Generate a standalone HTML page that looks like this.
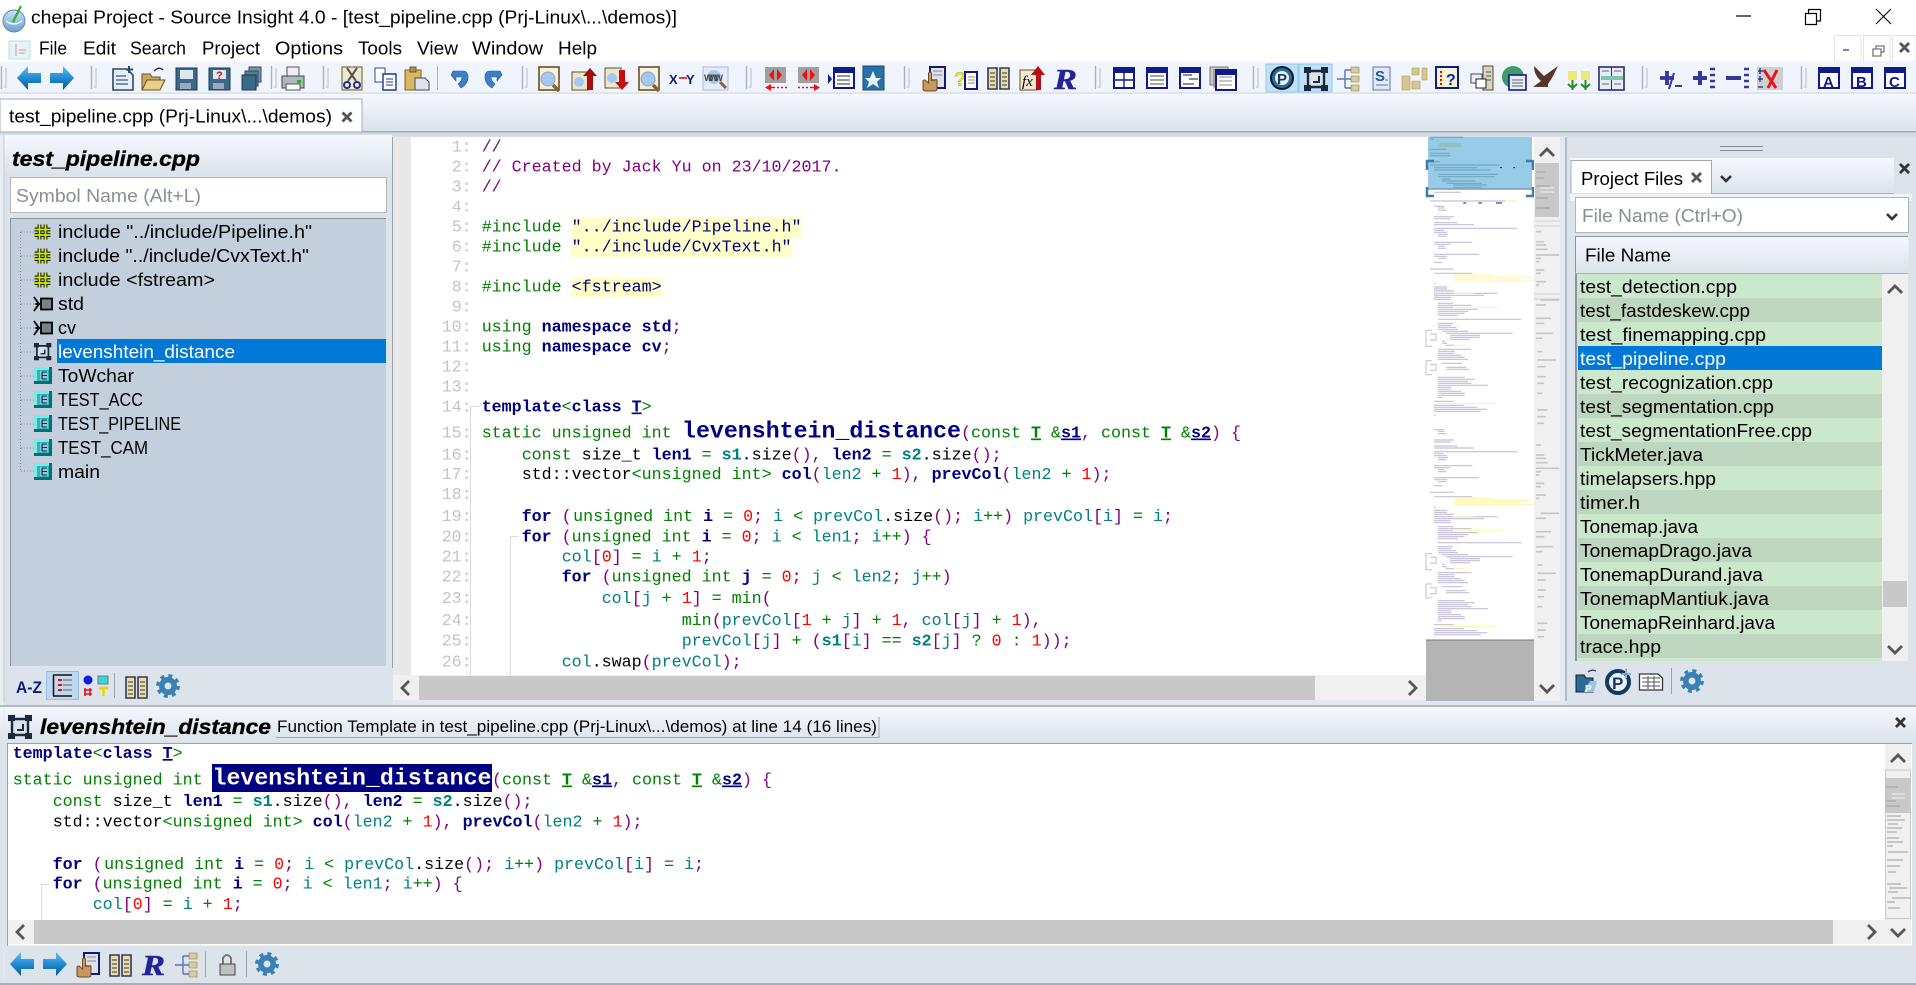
<!DOCTYPE html>
<html><head><meta charset="utf-8"><title>chepai Project - Source Insight 4.0</title>
<style>
html,body{margin:0;padding:0;background:#dce3eb;width:1916px;height:985px;overflow:hidden}
svg{display:block}
text{white-space:pre}
.s{font-family:"Liberation Sans",sans-serif;font-size:18.5px;fill:#000}
.p{font-family:"Liberation Sans",sans-serif;font-size:18.5px;fill:#8a8f94}
.b{font-family:"Liberation Sans",sans-serif;font-size:21px;font-weight:bold;font-style:italic;fill:#000;stroke:#000;stroke-width:.35px}
.m{font-family:"Liberation Mono",monospace;font-size:16.67px;fill:#000}
.n{font-family:"Liberation Mono",monospace;font-size:16.67px;fill:#c4c4c4}
.c{fill:#800080}.g{fill:#008000}.v{fill:#000080;font-weight:bold}.w{fill:#000080}
.t{fill:#008080}.tb{fill:#008080;font-weight:bold}.r{fill:#ff0000}.k{fill:#000}
.gb{fill:#008000;font-weight:bold}.u{text-decoration:underline}
</style></head><body>
<svg width="1916" height="985" viewBox="0 0 1916 985" xmlns="http://www.w3.org/2000/svg">
<defs>
<linearGradient id="hd" x1="0" y1="0" x2="0" y2="1"><stop offset="0" stop-color="#f5f8fe"/><stop offset="1" stop-color="#dce3eb"/></linearGradient>
<linearGradient id="ar" x1="0" y1="0" x2="0" y2="1"><stop offset="0" stop-color="#63bdf0"/><stop offset=".55" stop-color="#1c86cf"/><stop offset="1" stop-color="#0b5796"/></linearGradient>
<linearGradient id="sp" x1="0" y1="0" x2="0" y2="1"><stop offset="0" stop-color="#cfe2f4"/><stop offset="1" stop-color="#6a9fd0"/></linearGradient>
<clipPath id="mmc"><rect x="0" y="0" width="342" height="1525"/></clipPath>
<g id="al"><path d="M0 12 11 0V7H24V17H11V24Z" fill="url(#ar)"/></g>
<g id="ar2"><path d="M24 12 13 0V7H0V17H13V24Z" fill="url(#ar)"/></g>
<g id="gear"><circle cx="12" cy="12" r="10.3" fill="none" stroke="#3a80b5" stroke-width="3.2" stroke-dasharray="4 4.09"/><circle cx="12" cy="12" r="6.2" fill="none" stroke="#3a80b5" stroke-width="5.5"/></g>
<g id="book"><path d="M1 2H10V23H1ZM13 2H22V23H13Z" fill="#e6dcae" stroke="#333a55" stroke-width="1.6"/><path d="M3 7H8M3 11H8M3 15H8M3 19H8M15 7H20M15 11H20M15 15H20M15 19H20" stroke="#777050" stroke-width="1.6"/></g>
<g id="hand"><rect x="8" y="0" width="15" height="21" fill="#dfe0ea" stroke="#101a78" stroke-width="2"/><path d="M11 4H20M11 8H20" stroke="#888"/><path d="M1 14V22Q1 24 4 24H13Q15 24 15 21V13Q13 12 12 14V13Q10 12 9.5 14V6Q8 4 6.5 6V16L3 13Q1 13 1 14Z" fill="#c9985f" stroke="#6a4a24"/></g>
<g id="tree"><path d="M0 12H8M8 3V21M8 3H14M8 12H14M8 21H14" stroke="#5a74b8" stroke-width="1.4" fill="none"/><path d="M14 0H22V6H14ZM14 9H22V15H14ZM14 18H22V24H14Z" fill="#d9cc98" stroke="#8a7c50" stroke-width=".6"/></g>
<g id="frame"><path d="M4 4H20V20H4Z" fill="#d9e2ec" stroke="#1a2a3a" stroke-width="2.4"/><path d="M0 0H7V6H0ZM17 0H24V6H17ZM0 18H7V24H0ZM17 18H24V24H17Z" fill="#1a2a3a"/><path d="M9 15H15V9" stroke="#1a2a3a" stroke-width="2" fill="none"/></g>
<g id="win"><rect x="1" y="1" width="20" height="20" fill="#fff" stroke="#101a88" stroke-width="2"/><rect x="1" y="1" width="20" height="5" fill="#101a88"/></g>
<g id="hash"><path d="M0 5H16M0 10.500H16M5 0V15M11 0V15" stroke="#0a0a0a" stroke-width="3.800"/><path d="M0 5H16M0 10.500H16M5 0V15M11 0V15" stroke="#cdf000" stroke-width="1.800"/></g>
<g id="ns"><path d="M0 2 5 9 0 16" fill="none" stroke="#000" stroke-width="1.8"/><path d="M1 9H7" stroke="#000" stroke-width="1.6"/><rect x="7" y="3.5" width="11" height="11" fill="#7a8088" stroke="#000" stroke-width="1.8"/></g>
<g id="fn"><rect x="0" y="0" width="18" height="17" fill="#2ab8ba"/><path d="M0 0H18V3H3V17H0Z" fill="#7fe8e8"/><path d="M0 14H18V17H0ZM15 0H18V17H15Z" fill="#0c6a70"/><rect x="6" y="4" width="8" height="9" fill="#8ccbcb"/><path d="M8 5H13M8 8.500H13M8 12H13M8 5V12" stroke="#125" stroke-width="1.100" fill="none"/></g>
<g id="x"><path d="M1 1 10 10M10 1 1 10" stroke="#555" stroke-width="2.800"/></g>
<g id="xd"><path d="M1 1 10 10M10 1 1 10" stroke="#333" stroke-width="2.800"/></g>
<g id="cu"><path d="M0 8 7 1 14 8" fill="none" stroke="#555" stroke-width="2.800"/></g>
<g id="cd"><path d="M0 1 7 8 14 1" fill="none" stroke="#555" stroke-width="2.800"/></g>
<g id="cl"><path d="M8 0 1 7 8 14" fill="none" stroke="#555" stroke-width="2.800"/></g>
<g id="cr"><path d="M1 0 8 7 1 14" fill="none" stroke="#555" stroke-width="2.800"/></g>
<g id="sp1"><path d="M1.500 4V27" stroke="#a8b0ba" stroke-width="1.400"/><path d="M6 6V25H4" stroke="#b8bec6" fill="none"/></g>
<g id="mg"><circle cx="8" cy="10" r="7" fill="#a6c8ee" stroke="#88a8c8"/><path d="M13 16 19 22" stroke="#8a6030" stroke-width="3.500"/></g>
<g id="mmg" stroke-width="3.400" fill="none" stroke="#c4bfd8">
<path d="M42 229h30M54 234h20M54 241h25M42 260h60M42 266h50M42 278h70M42 284h120M42 295h250M42 301h30M42 307h40M54 313h30M54 319h25M42 337h115M42 343h50M54 349h20M54 355h25M42 373h135M42 379h40M54 385h25M42 397h25M30 417h70M42 430h115M42 461h5M42 471h40M42 477h40M42 483h60M42 490h190M42 496h150M42 502h50M42 508h50M54 520h45M54 526h100M54 532h45M54 538h120M54 544h90M54 550h80M54 556h60M54 568h250M54 580h45M54 586h40M54 592h55M54 598h60M66 604h80M78 610h200M90 616h90M90 622h90M90 628h60M66 634h10M66 640h15M78 646h25M54 658h100M54 664h50M54 670h50M54 676h70M54 682h80M54 688h90M66 700h60M78 712h60M78 718h70M54 742h80M54 748h110M54 754h90M54 760h100M54 766h150M54 772h40M54 778h40M54 784h70M54 790h80M54 796h80M54 802h12M42 814h60M42 826h90M42 832h130M42 838h160M42 844h140M42 856h5"/>
<path stroke="#fbf4ae" stroke-width="3" d="M102 435h120M102 441h235M102 447h200M102 453h240M100 490h60M100 532h140M100 646h35M60 820h170"/>
<path stroke="#c8c8c8" d="M18 601h18M18 601v48h18M30 612h18v18h-18M18 692h18M18 692v42h18M30 703h18v18h-18"/>
</g>
<g id="trk" stroke="#c6c6c6" stroke-width="5" fill="none"><path d="M408 305h15M408 335h25M408 345h30M408 358h35M408 375h70M408 385h15M408 395h10M408 420h25M408 430h15M408 455h30M408 465h10M422 510h55M408 525h30M408 565h45M408 580h25M408 610h50M408 625h20M412 665h15M412 690h55M412 710h25M412 740h25M412 760h20M412 790h15M412 840h30M412 860h25M412 880h20"/></g>
</defs>

<rect width="1916" height="985" fill="#dce3eb"/>
<!-- title bar -->
<rect width="1916" height="62" fill="#fff"/>
<circle cx="14" cy="21" r="11" fill="url(#sp)" stroke="#5a8ab8"/>
<path d="M6 21Q14 27 22 21" stroke="#fff" stroke-width="1.200" fill="none"/>
<path d="M13 22 21 6" stroke="#2cb030" stroke-width="2.200"/>
<text class="s" x="31" y="23.500" textLength="646" lengthAdjust="spacingAndGlyphs">chepai Project - Source Insight 4.0 - [test_pipeline.cpp (Prj-Linux\...\demos)]</text>
<path d="M1736 16H1751" stroke="#000" stroke-width="1.200"/>
<path d="M1805.500 13.500H1816.500V24.500H1805.500ZM1808.500 13V9.500H1820.500V21H1817" fill="none" stroke="#000" stroke-width="1.200"/>
<path d="M1876 9 1891 24M1891 9 1876 24" stroke="#000" stroke-width="1.100"/>
<path d="M1834.500 35.500H1861V62H1834.500ZM1863.500 35.500H1890V62H1863.500ZM1892.500 35.500H1916V62H1892.500Z" fill="#fff" stroke="#e4e4e4"/>
<path d="M1843 50H1849" stroke="#888" stroke-width="2"/>
<path d="M1873 49H1881V56H1873ZM1876 49V46H1884V52H1881" fill="none" stroke="#777" stroke-width="1.300"/>
<use href="#x" x="1899" y="42"/>
<!-- menu -->
<rect x="9" y="41" width="21" height="18" fill="#e4f3f8" stroke="#b8e0e8"/>
<path d="M16 44V56M19 50H26M19 53H25" stroke="#e59090"/>
<text class="s" x="39" y="54.500" textLength="28" lengthAdjust="spacingAndGlyphs">File</text>
<text class="s" x="83" y="54.500" textLength="33" lengthAdjust="spacingAndGlyphs">Edit</text>
<text class="s" x="130" y="54.500" textLength="56" lengthAdjust="spacingAndGlyphs">Search</text>
<text class="s" x="202" y="54.500" textLength="58" lengthAdjust="spacingAndGlyphs">Project</text>
<text class="s" x="275" y="54.500" textLength="68" lengthAdjust="spacingAndGlyphs">Options</text>
<text class="s" x="358" y="54.500" textLength="44" lengthAdjust="spacingAndGlyphs">Tools</text>
<text class="s" x="417" y="54.500" textLength="41" lengthAdjust="spacingAndGlyphs">View</text>
<text class="s" x="472" y="54.500" textLength="71" lengthAdjust="spacingAndGlyphs">Window</text>
<text class="s" x="558" y="54.500" textLength="39" lengthAdjust="spacingAndGlyphs">Help</text>
<!-- toolbar -->
<rect y="62" width="1916" height="32" fill="#f0f4fc"/>
<rect y="92" width="1916" height="2" fill="#dfe4ee"/>
<rect x="1266" y="64" width="32" height="28" fill="#c0e0f8" stroke="#90c8f0"/>
<rect x="1299" y="64" width="33" height="28" fill="#c0e0f8" stroke="#90c8f0"/>
<g>
<use href="#sp1" x="0" y="62"/><use href="#sp1" x="90" y="62"/><use href="#sp1" x="270" y="62" /><use href="#sp1" x="322" y="62"/><use href="#sp1" x="521" y="62"/><use href="#sp1" x="745" y="62"/><use href="#sp1" x="903" y="62"/><use href="#sp1" x="1094" y="62"/><use href="#sp1" x="1252" y="62"/><use href="#sp1" x="1641" y="62"/><use href="#sp1" x="1800" y="62"/>
<path d="M437.500 66V90" stroke="#a8b0ba"/>
<use href="#al" x="17" y="66"/><use href="#ar2" x="50" y="66"/>
<path d="M113 69H127L133 75V90H113Z" fill="#e8eef6" stroke="#2a4a6a" stroke-width="1.600"/><path d="M116 76H126M116 80H128M116 84H128" stroke="#3a5a8a" stroke-width="1.200"/><path d="M129 66V73M126 69.500H133" stroke="#2a4a6a" stroke-width="2"/>
<path d="M142 90V74H150L152 77H160V90Z" fill="#c9a860" stroke="#6a5020"/><path d="M142 90 147 80H165L160 90Z" fill="#e8cf8c" stroke="#6a5020"/><path d="M154 71Q159 66 163 70" stroke="#334" stroke-width="1.400" fill="none"/>
<rect x="176" y="68" width="21" height="22" fill="#3a6a88" stroke="#1a3a50"/><rect x="180" y="70" width="13" height="9" fill="#dfe8ee"/><rect x="180" y="83" width="11" height="6" fill="#9ab"/>
<rect x="209" y="68" width="21" height="22" fill="#3a6a88" stroke="#1a3a50"/><rect x="213" y="70" width="13" height="9" fill="#dfe8ee"/><rect x="213" y="83" width="11" height="6" fill="#9ab"/><text x="216" y="79" font-family="Liberation Sans" font-weight="bold" font-size="11" fill="#d01010">?</text>
<rect x="249" y="67" width="12" height="15" fill="#7a94a8" stroke="#2a4a60"/><rect x="245" y="71" width="13" height="15" fill="#5a7a90" stroke="#2a4a60"/><rect x="242" y="75" width="14" height="15" fill="#3a6a88" stroke="#1a3a50"/>
<path d="M287 67H299V76H287Z" fill="#eee" stroke="#555"/><path d="M282 76H304V88H282Z" fill="#b0b8c0" stroke="#445"/><rect x="286" y="84" width="14" height="6" fill="#fff" stroke="#555"/><rect x="297" y="80" width="4" height="3" fill="#28b028"/>
<rect x="342" y="67" width="20" height="23" fill="#efe8cc" stroke="#6a5a20"/><path d="M347 68 356 81M357 68 348 81" stroke="#555" stroke-width="2"/><circle cx="347" cy="85" r="3" fill="none" stroke="#20309a" stroke-width="2"/><circle cx="357" cy="85" r="3" fill="none" stroke="#20309a" stroke-width="2"/>
<path d="M375 68H385V82H375Z" fill="#fff" stroke="#2a4a9a"/><path d="M383 74H396V90H383Z" fill="#fff" stroke="#1a3a8a" stroke-width="1.400"/><path d="M386 79H393M386 82H393M386 85H393" stroke="#1a3a8a"/>
<rect x="405" y="70" width="16" height="20" fill="#d8b860" stroke="#7a6020"/><rect x="410" y="67" width="6" height="5" fill="#b09040" stroke="#654"/><path d="M415 78H425L429 82V90H415Z" fill="#dfe4ec" stroke="#445"/>
<path d="M453 71H463Q468 71 468 77Q468 84 461 88L458 84Q462 81 462 77H456V81L451 75Z" fill="#3f7fc8" stroke="#2a5a9a" stroke-width=".6"/><path d="M500 71H490Q485 71 485 77Q485 84 492 88L495 84Q491 81 491 77H497V81L502 75Z" fill="#3f7fc8" stroke="#2a5a9a" stroke-width=".6"/>
<rect x="539" y="67" width="20" height="23" fill="#f4f0dc" stroke="#6a5020" stroke-width="1.600"/><use href="#mg" x="540" y="69"/>
<rect x="572" y="72" width="17" height="18" fill="#ece6cc" stroke="#6a5020"/><circle cx="579" cy="82" r="5" fill="#a6c8ee"/><path d="M590 68 597 76H593V90H587V76H583Z" fill="#a80d12"/>
<rect x="605" y="68" width="16" height="20" fill="#ece6cc" stroke="#6a5020"/><circle cx="612" cy="78" r="5" fill="#a6c8ee"/><path d="M622 90 629 82H625V70H619V82H615Z" fill="#c80d12"/>
<rect x="639" y="67" width="20" height="23" fill="#f4f0dc" stroke="#6a5020" stroke-width="1.600"/><use href="#mg" x="640" y="69"/>
<text x="669" y="84" font-family="Liberation Sans" font-weight="bold" font-size="13" fill="#101a78" textLength="10">X</text><path d="M679 78H687" stroke="#e01010" stroke-width="1.600"/><text x="686" y="84" font-family="Liberation Sans" font-weight="bold" font-size="13" fill="#101a78" textLength="9">Y</text>
<rect x="703" y="67" width="25" height="23" fill="#e8ecf8" stroke="#a8b8e0"/><circle cx="714" cy="77" r="7" fill="#a6c8ee"/><text x="704" y="81" font-family="Liberation Sans" font-weight="bold" font-size="9" fill="#444" textLength="19">WWW</text><path d="M720 82 726 88" stroke="#8a6030" stroke-width="3"/>
<rect x="765" y="67" width="21" height="16" fill="#a0a0a0"/><path d="M774 69V81L769 75ZM777 69V81L782 75Z" fill="#f01010"/><path d="M765 87.500 771 84V91Z" fill="#f01010"/><path d="M771 87.500H775M777 87.500H779M781 87.500H783M785 87.500H787" stroke="#f01010" stroke-width="1.500"/>
<rect x="798" y="67" width="21" height="16" fill="#a0a0a0"/><path d="M807 69V81L802 75ZM810 69V81L815 75Z" fill="#f01010"/><path d="M820 87.500 814 84V91Z" fill="#f01010"/><path d="M798 87.500H800M802 87.500H804M806 87.500H808M810 87.500H814" stroke="#f01010" stroke-width="1.500"/>
<use href="#win" x="833" y="67"/><path d="M837 76H850M837 80H850M837 84H850" stroke="#777" stroke-width="1.600"/><path d="M828 74V84L832 79Z" fill="#101a88"/>
<rect x="863" y="66" width="21" height="24" fill="#2a6fa8" stroke="#1a4a70"/><path d="M873 71 876 78H881L877 82 879 88 873 84 867 88 869 82 865 78H870Z" fill="#eaf4fc"/>
<use href="#hand" x="922" y="67"/>
<text x="954" y="86" font-family="Liberation Sans" font-weight="bold" font-size="20" fill="#e8e800" stroke="#888" stroke-width=".3">?</text><rect x="965" y="72" width="12" height="17" fill="#fff" stroke="#101a88" stroke-width="2"/><path d="M968 77H975M968 80H975M968 83H975" stroke="#888"/>
<use href="#book" x="987" y="66"/>
<rect x="1020" y="70" width="17" height="20" fill="#f0e8d0" stroke="#6a5020"/><text x="1022" y="86" font-family="Liberation Serif" font-style="italic" font-size="15" fill="#000">fx</text><path d="M1038 66 1045 75H1041V90H1036V75H1031Z" fill="#b80d12"/>
<text x="1054" y="89" font-family="Liberation Serif" font-weight="bold" font-style="italic" font-size="29" fill="#24249a" stroke="#24249a" stroke-width=".5" textLength="23" lengthAdjust="spacingAndGlyphs">R</text>
<use href="#win" x="1113" y="67"/><path d="M1124 72V88M1114 80H1134" stroke="#101a88" stroke-width="1.400"/>
<use href="#win" x="1146" y="67"/><path d="M1150 76H1164M1150 80H1164M1150 84H1164" stroke="#888" stroke-width="1.600"/>
<use href="#win" x="1179" y="67"/><path d="M1183 75H1192M1189 79H1198M1183 84H1194" stroke="#666" stroke-width="1.400"/>
<rect x="1210" y="67" width="18" height="18" fill="#c8c8c8" stroke="#777"/><rect x="1214" y="70" width="18" height="17" fill="#d8d8d8" stroke="#777"/><use href="#win" x="1215" y="69"/><path d="M1219 77H1232M1219 81H1232M1219 85H1232" stroke="#888"/>
<circle cx="1282" cy="78" r="11" fill="#2a6a98" stroke="#0a1a2a" stroke-width="2"/><circle cx="1282" cy="78" r="7" fill="#e8f0f8"/><text x="1277" y="84" font-family="Liberation Sans" font-weight="bold" font-size="15" fill="#1a3a5a">P</text>
<use href="#frame" x="1304" y="67"/>
<use href="#tree" x="1337" y="67"/>
<rect x="1373" y="67" width="17" height="23" fill="#e4e8f2" stroke="#5a74b8"/><text x="1375" y="81" font-family="Liberation Sans" font-weight="bold" font-size="15" fill="#1a5aa8">S</text><path d="M1376 85H1388M1385 80H1388" stroke="#5a74b8"/>
<path d="M1412 68H1419V75H1412ZM1422 68H1427V80H1422ZM1402 76H1410V90H1402ZM1412 81H1420V89H1412Z" fill="#d6c88c" stroke="#a8985c" stroke-width=".6"/>
<rect x="1436" y="67" width="22" height="21" fill="#f4f4d0" stroke="#101a88" stroke-width="2"/><text x="1446" y="85" font-family="Liberation Sans" font-weight="bold" font-size="16" fill="#0820c8">?</text><path d="M1441 71V86" stroke="#e01010" stroke-dasharray="2 2" stroke-width="2"/>
<rect x="1483" y="66" width="10" height="24" fill="#d8d4c0" stroke="#5a4a30"/><path d="M1486 72H1491M1486 76H1491M1486 80H1491" stroke="#555"/><rect x="1471" y="74" width="11" height="9" fill="#eef" stroke="#334a88"/><rect x="1476" y="79" width="10" height="9" fill="#fff" stroke="#222"/>
<circle cx="1513" cy="77" r="11" fill="#3e9a68"/><rect x="1509" y="75" width="17" height="15" fill="#e8ecf8" stroke="#101a88" stroke-width="1.600"/><path d="M1512 80H1523M1512 83H1523M1512 86H1523" stroke="#666"/>
<path d="M1534 66 1544 76 1558 66 1552 78 1548 84 1548 87H1533L1541 81Q1534 75 1534 66Z" fill="#5a3428"/>
<rect x="1568" y="71" width="9" height="9" fill="#ece87a"/><rect x="1581" y="71" width="9" height="9" fill="#ece87a"/><path d="M1572.500 80V90M1585.500 80V90M1568 84 1572.500 88 1577 84M1581 84 1585.500 88 1590 84" stroke="#2a8a2a" stroke-width="2" fill="none"/>
<rect x="1599" y="67" width="25" height="23" fill="#e8ecf8" stroke="#2a2a78" stroke-width="1.600"/><path d="M1611.500 67V90" stroke="#2a2a78"/><path d="M1601 76H1623V80H1601Z" fill="#7ac8a8"/><path d="M1602 71H1609M1614 71H1621M1602 84H1609M1614 84H1621" stroke="#667"/>
<path d="M1660 78H1674M1667 71V85" stroke="#34389a" stroke-width="3.800"/><path d="M1674 73 1669 89M1675 86H1682" stroke="#34389a" stroke-width="2"/>
<path d="M1693 78H1707M1700 71V85" stroke="#34389a" stroke-width="4"/><path d="M1710 69H1715M1710 75H1715M1710 81H1715M1710 87H1715" stroke="#34389a" stroke-width="2.600"/>
<path d="M1726 78H1741" stroke="#34389a" stroke-width="4"/><path d="M1744 69H1749M1744 75H1749M1744 81H1749M1744 87H1749" stroke="#34389a" stroke-width="2.600"/>
<rect x="1757" y="67" width="26" height="23" fill="#cfcfcf"/><path d="M1764 70 1776 88M1777 70 1768 88" stroke="#e01818" stroke-width="3"/><path d="M1758 71H1763M1760 68V74M1758 79H1763M1760 76V82M1758 87H1763" stroke="#20288a" stroke-width="1.200"/>
<g font-family="Liberation Sans" font-weight="bold" font-size="15" fill="#101a88"><use href="#win" x="1818" y="67"/><text x="1823" y="87">A</text><use href="#win" x="1851" y="67"/><text x="1856" y="87">B</text><use href="#win" x="1884" y="67"/><text x="1889" y="87">C</text></g>
</g>
<!-- tab row -->
<rect y="94" width="1916" height="37" fill="url(#hd)"/>
<rect y="131" width="1916" height="1.500" fill="#a6abb5"/>
<rect y="132.500" width="1916" height="4" fill="#d4dbe4"/>
<path d="M0 99H362V132H0Z" fill="#fff" stroke="#a6abb5"/>
<text class="s" x="9" y="122.500" textLength="323" lengthAdjust="spacingAndGlyphs">test_pipeline.cpp (Prj-Linux\...\demos)</text>
<use href="#x" x="341.500" y="111.500"/>

<!-- left panel -->
<rect x="0" y="135" width="393" height="570" fill="#dce3eb"/>
<rect x="4" y="135" width="388" height="40" fill="url(#hd)"/>
<rect x="0" y="135" width="3.500" height="570" fill="#e9edf2"/>
<path d="M4 135V703" stroke="#c4ccd4"/>
<path d="M392.500 137V668" stroke="#9aa2aa"/>
<rect x="393" y="137" width="18" height="538" fill="#e8e8e8"/>
<text class="b" x="12" y="166" textLength="188" lengthAdjust="spacingAndGlyphs">test_pipeline.cpp</text>
<rect x="10.500" y="177.500" width="376" height="35" fill="#fff" stroke="#b0b6bd"/>
<text class="p" x="16" y="202" textLength="185" lengthAdjust="spacingAndGlyphs">Symbol Name (Alt+L)</text>
<rect x="10" y="218" width="376" height="448" fill="#c3cfdc"/>
<path d="M10.500 666V218.500H386" fill="none" stroke="#8c949c"/>
<rect x="57" y="339" width="329" height="24" fill="#0078d7"/>
<path d="M20.500 232V471M21 232H34M21 256H34M21 280H34M21 304H34M21 328H34M21 352H34M21 376H34M21 400H34M21 424H34M21 448H34M21 471H34" stroke="#8a8f96" stroke-dasharray="1 2" fill="none"/>
<use href="#hash" x="34.500" y="224.500"/><use href="#hash" x="34.500" y="248.500"/><use href="#hash" x="34.500" y="272.500"/>
<use href="#ns" x="34" y="295"/><use href="#ns" x="34" y="319"/>
<g transform="translate(34,343) scale(.72)"><use href="#frame"/></g>
<use href="#fn" x="34" y="367"/><use href="#fn" x="34" y="391"/><use href="#fn" x="34" y="415"/><use href="#fn" x="34" y="439"/><use href="#fn" x="34" y="463"/>
<text class="s" x="58" y="238" textLength="254" lengthAdjust="spacingAndGlyphs">include "../include/Pipeline.h"</text>
<text class="s" x="58" y="262" textLength="251" lengthAdjust="spacingAndGlyphs">include "../include/CvxText.h"</text>
<text class="s" x="58" y="286" textLength="157" lengthAdjust="spacingAndGlyphs">include &lt;fstream&gt;</text>
<text class="s" x="58" y="310" textLength="26" lengthAdjust="spacingAndGlyphs">std</text>
<text class="s" x="58" y="334" textLength="18" lengthAdjust="spacingAndGlyphs">cv</text>
<text class="s" x="58" y="358" textLength="177" lengthAdjust="spacingAndGlyphs" style="fill:#fff">levenshtein_distance</text>
<text class="s" x="58" y="382" textLength="76" lengthAdjust="spacingAndGlyphs">ToWchar</text>
<text class="s" x="58" y="406" textLength="85" lengthAdjust="spacingAndGlyphs">TEST_ACC</text>
<text class="s" x="58" y="430" textLength="123" lengthAdjust="spacingAndGlyphs">TEST_PIPELINE</text>
<text class="s" x="58" y="454" textLength="90" lengthAdjust="spacingAndGlyphs">TEST_CAM</text>
<text class="s" x="58" y="478" textLength="42" lengthAdjust="spacingAndGlyphs">main</text>
<!-- left bottom toolbar -->
<text x="16" y="693" font-family="Liberation Sans" font-weight="bold" font-size="17" fill="#101a78" textLength="26" lengthAdjust="spacingAndGlyphs">A-Z</text>
<rect x="46.500" y="671.500" width="32" height="28" fill="#c0d8ee" stroke="#90c0e8"/>
<path d="M53 675H72M53.500 675V696M53 696H72" stroke="#111" stroke-width="1.500" fill="none"/>
<path d="M58 680H62M58 685H62M58 690H62" stroke="#e01010" stroke-width="2"/><path d="M63 680H72M63 685H72M63 690H72" stroke="#888" stroke-width="1.500"/>
<circle cx="88" cy="680" r="4.500" fill="#0a20e0"/><rect x="98" y="676" width="10" height="8" fill="#30d8e0" stroke="#777"/>
<path d="M85 688V696M90 688V696M84 690H92M84 694H92" stroke="#e01010" stroke-width="1.500"/>
<path d="M99 688H108M103.500 688V696" stroke="#e8d800" stroke-width="2.500"/>
<path d="M114.500 673V698" stroke="#9aa2aa"/>
<use href="#book" x="125" y="675"/>
<use href="#gear" x="156" y="674"/>
<!-- editor -->
<rect x="411" y="137" width="1015" height="538" fill="#fff"/>
<path d="M479 406.500H470.500V675M518 536.500H510.500V675" fill="none" stroke="#dcdcdc"/>
<rect x="571" y="217" width="230" height="20" fill="#ffffc8"/><rect x="571" y="237" width="220" height="20" fill="#ffffc8"/><rect x="571" y="277" width="90" height="20" fill="#ffffc8"/>
<text class="n" x="451.700" y="151.500">1:</text><text class="n" x="451.700" y="171.500">2:</text><text class="n" x="451.700" y="191.500">3:</text><text class="n" x="451.700" y="211.500">4:</text><text class="n" x="451.700" y="231.500">5:</text><text class="n" x="451.700" y="251.500">6:</text><text class="n" x="451.700" y="271.500">7:</text><text class="n" x="451.700" y="291.500">8:</text><text class="n" x="451.700" y="311.500">9:</text>
<text class="n" x="441.700" y="331.500">10:</text><text class="n" x="441.700" y="351.500">11:</text><text class="n" x="441.700" y="371.500">12:</text><text class="n" x="441.700" y="391.500">13:</text><text class="n" x="441.700" y="411.500">14:</text><text class="n" x="441.700" y="437.500">15:</text><text class="n" x="441.700" y="459.500">16:</text><text class="n" x="441.700" y="479">17:</text><text class="n" x="441.700" y="499">18:</text><text class="n" x="441.700" y="521">19:</text><text class="n" x="441.700" y="541.500">20:</text><text class="n" x="441.700" y="561.500">21:</text><text class="n" x="441.700" y="581.500">22:</text><text class="n" x="441.700" y="603">23:</text><text class="n" x="441.700" y="625">24:</text><text class="n" x="441.700" y="645.500">25:</text><text class="n" x="441.700" y="666.500">26:</text>
<text class="m" x="481.700" y="151.500"><tspan class="c">//</tspan></text>
<text class="m" x="481.700" y="171.500"><tspan class="c">// Created by Jack Yu on 23/10/2017.</tspan></text>
<text class="m" x="481.700" y="191.500"><tspan class="c">//</tspan></text>
<text class="m" x="481.700" y="231.500"><tspan class="g">#include </tspan><tspan class="w">"../include/Pipeline.h"</tspan></text>
<text class="m" x="481.700" y="251.500"><tspan class="g">#include </tspan><tspan class="w">"../include/CvxText.h"</tspan></text>
<text class="m" x="481.700" y="291.500"><tspan class="g">#include </tspan><tspan class="w">&lt;fstream&gt;</tspan></text>
<text class="m" x="481.700" y="331.500"><tspan class="g">using </tspan><tspan class="v">namespace std</tspan><tspan class="c">;</tspan></text>
<text class="m" x="481.700" y="351.500"><tspan class="g">using </tspan><tspan class="v">namespace cv</tspan><tspan class="c">;</tspan></text>
<text class="m" x="481.700" y="411.500"><tspan class="v">template</tspan><tspan class="g">&lt;</tspan><tspan class="v">class </tspan><tspan class="v u">T</tspan><tspan class="g">&gt;</tspan></text>
<text class="m" x="481.700" y="437.500"><tspan class="g">static unsigned int </tspan></text>
<text class="m" x="682" y="437.500" style="font-size:23px;font-weight:bold;fill:#000080" textLength="279" lengthAdjust="spacingAndGlyphs">levenshtein_distance</text>
<text class="m" x="961" y="437.500"><tspan class="c">(</tspan><tspan class="g">const </tspan><tspan class="gb u">T</tspan><tspan class="g"> &amp;</tspan><tspan class="v u">s1</tspan><tspan class="c">,</tspan><tspan class="g"> const </tspan><tspan class="gb u">T</tspan><tspan class="g"> &amp;</tspan><tspan class="v u">s2</tspan><tspan class="c">) {</tspan></text>
<text class="m" x="521.700" y="459.500"><tspan class="g">const </tspan><tspan class="k">size_t </tspan><tspan class="v">len1</tspan><tspan class="g"> = </tspan><tspan class="tb">s1</tspan><tspan class="k">.size</tspan><tspan class="c">()</tspan><tspan class="c">, </tspan><tspan class="v">len2</tspan><tspan class="g"> = </tspan><tspan class="tb">s2</tspan><tspan class="k">.size</tspan><tspan class="c">()</tspan><tspan class="c">;</tspan></text>
<text class="m" x="521.700" y="479"><tspan class="k">std::vector</tspan><tspan class="g">&lt;unsigned int&gt; </tspan><tspan class="v">col</tspan><tspan class="c">(</tspan><tspan class="t">len2</tspan><tspan class="g"> + </tspan><tspan class="r">1</tspan><tspan class="c">), </tspan><tspan class="v">prevCol</tspan><tspan class="c">(</tspan><tspan class="t">len2</tspan><tspan class="g"> + </tspan><tspan class="r">1</tspan><tspan class="c">);</tspan></text>
<text class="m" x="521.700" y="521"><tspan class="v">for </tspan><tspan class="c">(</tspan><tspan class="g" dx="1.500">unsigned int </tspan><tspan class="v">i</tspan><tspan class="g"> = </tspan><tspan class="r">0</tspan><tspan class="c">; </tspan><tspan class="t">i</tspan><tspan class="g"> &lt; </tspan><tspan class="t">prevCol</tspan><tspan class="k">.size</tspan><tspan class="c">(); </tspan><tspan class="t">i</tspan><tspan class="g">++</tspan><tspan class="c">) </tspan><tspan class="t">prevCol</tspan><tspan class="c">[</tspan><tspan class="t">i</tspan><tspan class="c">]</tspan><tspan class="g"> = </tspan><tspan class="t">i</tspan><tspan class="c">;</tspan></text>
<text class="m" x="521.700" y="541.500"><tspan class="v">for </tspan><tspan class="c">(</tspan><tspan class="g">unsigned int </tspan><tspan class="v">i</tspan><tspan class="g"> = </tspan><tspan class="r">0</tspan><tspan class="c">; </tspan><tspan class="t">i</tspan><tspan class="g"> &lt; </tspan><tspan class="t">len1</tspan><tspan class="c">; </tspan><tspan class="t">i</tspan><tspan class="g">++</tspan><tspan class="c">) {</tspan></text>
<text class="m" x="561.700" y="561.500"><tspan class="t">col</tspan><tspan class="c">[</tspan><tspan class="r">0</tspan><tspan class="c">]</tspan><tspan class="g"> = </tspan><tspan class="t">i</tspan><tspan class="g"> + </tspan><tspan class="r">1</tspan><tspan class="c">;</tspan></text>
<text class="m" x="561.700" y="581.500"><tspan class="v">for </tspan><tspan class="c">(</tspan><tspan class="g">unsigned int </tspan><tspan class="v">j</tspan><tspan class="g"> = </tspan><tspan class="r">0</tspan><tspan class="c">; </tspan><tspan class="t">j</tspan><tspan class="g"> &lt; </tspan><tspan class="t">len2</tspan><tspan class="c">; </tspan><tspan class="t">j</tspan><tspan class="g">++</tspan><tspan class="c">)</tspan></text>
<text class="m" x="601.700" y="603"><tspan class="t">col</tspan><tspan class="c">[</tspan><tspan class="t">j</tspan><tspan class="g"> + </tspan><tspan class="r">1</tspan><tspan class="c">]</tspan><tspan class="g"> = min</tspan><tspan class="c">(</tspan></text>
<text class="m" x="681.700" y="625"><tspan class="g">min</tspan><tspan class="c">(</tspan><tspan class="t">prevCol</tspan><tspan class="c">[</tspan><tspan class="r">1</tspan><tspan class="g"> + </tspan><tspan class="t">j</tspan><tspan class="c">]</tspan><tspan class="g"> + </tspan><tspan class="r">1</tspan><tspan class="c">, </tspan><tspan class="t">col</tspan><tspan class="c">[</tspan><tspan class="t">j</tspan><tspan class="c">]</tspan><tspan class="g"> + </tspan><tspan class="r">1</tspan><tspan class="c">),</tspan></text>
<text class="m" x="681.700" y="645.500"><tspan class="t">prevCol</tspan><tspan class="c">[</tspan><tspan class="t">j</tspan><tspan class="c">]</tspan><tspan class="g"> + </tspan><tspan class="c">(</tspan><tspan class="tb">s1</tspan><tspan class="c">[</tspan><tspan class="t">i</tspan><tspan class="c">]</tspan><tspan class="g"> == </tspan><tspan class="tb">s2</tspan><tspan class="c">[</tspan><tspan class="t">j</tspan><tspan class="c">]</tspan><tspan class="g"> ? </tspan><tspan class="r">0</tspan><tspan class="g"> : </tspan><tspan class="r">1</tspan><tspan class="c">));</tspan></text>
<text class="m" x="561.700" y="666.500"><tspan class="t">col</tspan><tspan class="k">.swap</tspan><tspan class="c">(</tspan><tspan class="t">prevCol</tspan><tspan class="c">);</tspan></text>
<!-- editor h-scroll -->
<rect x="393" y="675" width="1033" height="25" fill="#f0f0f0"/>
<rect x="419" y="676" width="896" height="24" fill="#c8c8c8"/>
<use href="#cl" x="401" y="681"/><use href="#cr" x="1408" y="681"/>
<rect x="393" y="700" width="1174" height="5" fill="#e2e8f2"/>
<!-- minimap -->
<rect x="1426" y="137" width="108" height="503" fill="#fff"/>
<rect x="1426" y="640" width="108" height="61" fill="#b4b4b4"/>
<path d="M1426 640H1534" stroke="#777"/>
<rect x="1428" y="137" width="104" height="52" fill="#97cbe8"/>
<path d="M1428 189H1532" stroke="#7a9cb0" stroke-width="1.400"/>
<g transform="translate(1420,130) scale(.33333)" clip-path="url(#mmc)">
<path stroke="#6fa8c0" stroke-width="3.400" fill="none" d="M30 22h100M30 28h10M30 58h50M30 70h60M30 77h60M30 95h30M30 105h210M42 113h130M42 120h170M54 133h180M54 140h170M66 147h25M66 153h100M80 160h105M100 165h100M100 172h85"/>
<path stroke="#8dc0a0" stroke-width="3.400" fill="none" d="M58 42h65M58 48h65"/>
<path stroke="#c4bfd8" stroke-width="3.400" fill="none" d="M42 187h80M30 213h225"/>
<path stroke="#f8f09c" stroke-width="3" fill="none" d="M255 213h35"/>
<path stroke="#101a88" stroke-width="3" fill="none" d="M130 219h9M175 219h11M228 219h18M240 113h6M280 113h5"/>
<use href="#mmg"/>
<use href="#mmg" y="670"/>
</g>
<path d="M1427 170V161H1434M1533 170V161H1526M1427 187V196H1434M1533 187V196H1526" fill="none" stroke="#3b7ea6" stroke-width="2.500"/>
<!-- editor v-scroll -->
<rect x="1534" y="137" width="26" height="564" fill="#f0f0f0"/>
<use href="#cu" x="1540" y="148"/><use href="#cd" x="1540" y="684"/>
<rect x="1535" y="163" width="24" height="54" fill="#c8c8c8"/>
<path d="M1540 188H1554M1540 192H1554" stroke="#f4f4f4"/>
<g transform="translate(1400,130) scale(.33333)"><use href="#trk"/><use href="#trk" y="640"/></g>
<path d="M1536 172h10M1536 178h8M1536 186h14M1536 198h12M1536 208h14" stroke="#b4b4b4" stroke-width="2"/>
<path d="M1534 221H1560M1534 226H1560M1534 294H1560M1534 299H1560" stroke="#d0d0d0"/>
<rect x="1560" y="137" width="5" height="564" fill="#e2e8f2"/>
<rect x="1565" y="137" width="2" height="564" fill="#b3bac3"/>
<!-- right panel -->
<rect x="1567" y="137" width="349" height="564" fill="#dce3eb"/>
<path d="M1720 146.500H1763M1720 150.500H1763" stroke="#868e98"/>
<rect x="1570" y="158" width="324" height="36" fill="url(#hd)"/>
<path d="M1571 193V160.500H1711.500V193" fill="#fff" stroke="#a0a8b0"/>
<rect x="1572" y="161" width="139" height="32" fill="#fff"/>
<path d="M1711 193.500H1894" stroke="#a8b0b8"/>
<text class="s" x="1581" y="185" textLength="102" lengthAdjust="spacingAndGlyphs">Project Files</text>
<use href="#x" x="1691" y="172"/>
<path d="M1721 176 1726 181 1731 176" fill="none" stroke="#333" stroke-width="2.600"/>
<use href="#xd" x="1899" y="163"/>
<rect x="1570" y="194" width="342" height="7" fill="#f0f4fa"/>
<rect x="1575.500" y="197.500" width="333" height="35" fill="#fff" stroke="#b0b6bd"/>
<text class="p" x="1582" y="222" textLength="161" lengthAdjust="spacingAndGlyphs">File Name (Ctrl+O)</text>
<path d="M1887 214 1892 219 1897 214" fill="none" stroke="#333" stroke-width="2.600"/>
<rect x="1575.500" y="236.500" width="333" height="37" fill="url(#hd)"/>
<path d="M1575.500 273V236.500H1908" fill="none" stroke="#8c949c"/>
<path d="M1575 273.500H1908" stroke="#a8b0b8"/>
<text class="s" x="1585" y="261.500" textLength="86" lengthAdjust="spacingAndGlyphs">File Name</text>
<!-- list -->
<rect x="1575" y="274" width="2" height="387" fill="#8c949c"/>
<rect x="1577" y="274" width="305" height="387" fill="#cce8cc"/>
<path d="M1578 298H1882V322H1578ZM1578 394H1882V418H1578ZM1578 442H1882V466H1578ZM1578 490H1882V514H1578ZM1578 538H1882V562H1578ZM1578 586H1882V610H1578ZM1578 634H1882V658H1578Z" fill="#bed6bf"/>
<rect x="1578" y="346" width="304" height="24" fill="#0078d7"/>
<rect x="1882" y="274" width="26" height="387" fill="#f0f0f0"/>
<rect x="1883" y="581" width="24" height="26" fill="#c8c8c8"/>
<use href="#cu" x="1888" y="285"/><use href="#cd" x="1888" y="645"/>
<text class="s" x="1580" y="293" textLength="157" lengthAdjust="spacingAndGlyphs">test_detection.cpp</text>
<text class="s" x="1580" y="317" textLength="170" lengthAdjust="spacingAndGlyphs">test_fastdeskew.cpp</text>
<text class="s" x="1580" y="341" textLength="186" lengthAdjust="spacingAndGlyphs">test_finemapping.cpp</text>
<text class="s" x="1580" y="365" textLength="146" lengthAdjust="spacingAndGlyphs" style="fill:#fff">test_pipeline.cpp</text>
<text class="s" x="1580" y="389" textLength="193" lengthAdjust="spacingAndGlyphs">test_recognization.cpp</text>
<text class="s" x="1580" y="413" textLength="194" lengthAdjust="spacingAndGlyphs">test_segmentation.cpp</text>
<text class="s" x="1580" y="437" textLength="232" lengthAdjust="spacingAndGlyphs">test_segmentationFree.cpp</text>
<text class="s" x="1580" y="461" textLength="123" lengthAdjust="spacingAndGlyphs">TickMeter.java</text>
<text class="s" x="1580" y="485" textLength="136" lengthAdjust="spacingAndGlyphs">timelapsers.hpp</text>
<text class="s" x="1580" y="509" textLength="60" lengthAdjust="spacingAndGlyphs">timer.h</text>
<text class="s" x="1580" y="533" textLength="118" lengthAdjust="spacingAndGlyphs">Tonemap.java</text>
<text class="s" x="1580" y="557" textLength="172" lengthAdjust="spacingAndGlyphs">TonemapDrago.java</text>
<text class="s" x="1580" y="581" textLength="183" lengthAdjust="spacingAndGlyphs">TonemapDurand.java</text>
<text class="s" x="1580" y="605" textLength="189" lengthAdjust="spacingAndGlyphs">TonemapMantiuk.java</text>
<text class="s" x="1580" y="629" textLength="195" lengthAdjust="spacingAndGlyphs">TonemapReinhard.java</text>
<text class="s" x="1580" y="653" textLength="81" lengthAdjust="spacingAndGlyphs">trace.hpp</text>
<!-- right bottom toolbar -->
<path d="M1576 692V675H1584L1586 678H1593V692Z" fill="#2c6a98" stroke="#123"/><path d="M1584 692 1590 681H1597L1594 692Z" fill="#9ac4e4"/><path d="M1588 672Q1592 669 1596 671" stroke="#345" fill="none" stroke-width="1.400"/><text x="1585" y="692" font-family="Liberation Sans" font-weight="bold" font-size="10" fill="#fff">P</text>
<circle cx="1618" cy="682" r="11" fill="#e8f0f8" stroke="#143a60" stroke-width="4"/><text x="1612" y="689" font-family="Liberation Sans" font-weight="bold" font-size="17" fill="#143a60">P</text><path d="M1626 670V678M1622 674H1630" stroke="#fff" stroke-width="2"/><path d="M1626 669V679M1621 674H1631" stroke="#2a6a98" stroke-width="1"/>
<path d="M1639.500 674H1658L1662.500 678V690H1639.500Z" fill="#fff" stroke="#333" stroke-width="1.300"/><path d="M1642 678H1660M1642 682H1660M1642 686H1660M1648 676V689M1654 676V689" stroke="#555"/>
<path d="M1671.500 668V694" stroke="#9aa2aa"/>
<use href="#gear" x="1680" y="669"/>
<!-- divider -->
<rect y="705" width="1916" height="2" fill="#b3bac3"/>
<!-- preview panel -->
<rect y="707" width="1916" height="36" fill="url(#hd)"/>
<rect x="0" y="743" width="1916" height="242" fill="#dce3eb"/>
<rect y="983" width="1916" height="2" fill="#a8aeb6"/>
<path d="M4 707V983" stroke="#e6eaf0"/>
<use href="#frame" x="8" y="715"/>
<text class="b" x="40" y="734" textLength="231" lengthAdjust="spacingAndGlyphs">levenshtein_distance</text>
<path d="M276 737.500H879M879 717V738" stroke="#9aa2aa" fill="none"/>
<text class="s" x="277" y="732" style="font-size:17px" textLength="600" lengthAdjust="spacingAndGlyphs">Function Template in test_pipeline.cpp (Prj-Linux\...\demos) at line 14 (16 lines)</text>
<use href="#xd" x="1895" y="717"/>
<rect x="8" y="743.500" width="1904" height="202" fill="#fff"/>
<path d="M7.500 946V743.500H1912" fill="none" stroke="#9aa2aa"/>
<path d="M49 884.500H41.500V920" fill="none" stroke="#dcdcdc"/>
<rect x="212" y="764" width="280" height="28" fill="#000080"/>
<text class="m" x="12.700" y="758"><tspan class="v">template</tspan><tspan class="g">&lt;</tspan><tspan class="v">class </tspan><tspan class="v u">T</tspan><tspan class="g">&gt;</tspan></text>
<text class="m" x="12.700" y="784.500"><tspan class="g">static unsigned int </tspan></text>
<text class="m" x="212.500" y="784.500" style="font-size:23px;font-weight:bold;fill:#fff" textLength="279" lengthAdjust="spacingAndGlyphs">levenshtein_distance</text>
<text class="m" x="492" y="784.500"><tspan class="c">(</tspan><tspan class="g">const </tspan><tspan class="gb u">T</tspan><tspan class="g"> &amp;</tspan><tspan class="v u">s1</tspan><tspan class="c">,</tspan><tspan class="g"> const </tspan><tspan class="gb u">T</tspan><tspan class="g"> &amp;</tspan><tspan class="v u">s2</tspan><tspan class="c">) {</tspan></text>
<text class="m" x="52.700" y="806"><tspan class="g">const </tspan><tspan class="k">size_t </tspan><tspan class="v">len1</tspan><tspan class="g"> = </tspan><tspan class="tb">s1</tspan><tspan class="k">.size</tspan><tspan class="c">(), </tspan><tspan class="v">len2</tspan><tspan class="g"> = </tspan><tspan class="tb">s2</tspan><tspan class="k">.size</tspan><tspan class="c">();</tspan></text>
<text class="m" x="52.700" y="826.500"><tspan class="k">std::vector</tspan><tspan class="g">&lt;unsigned int&gt; </tspan><tspan class="v">col</tspan><tspan class="c">(</tspan><tspan class="t">len2</tspan><tspan class="g"> + </tspan><tspan class="r">1</tspan><tspan class="c">), </tspan><tspan class="v">prevCol</tspan><tspan class="c">(</tspan><tspan class="t">len2</tspan><tspan class="g"> + </tspan><tspan class="r">1</tspan><tspan class="c">);</tspan></text>
<text class="m" x="52.700" y="869"><tspan class="v">for </tspan><tspan class="c">(</tspan><tspan class="g" dx="1.500">unsigned int </tspan><tspan class="v">i</tspan><tspan class="g"> = </tspan><tspan class="r">0</tspan><tspan class="c">; </tspan><tspan class="t">i</tspan><tspan class="g"> &lt; </tspan><tspan class="t">prevCol</tspan><tspan class="k">.size</tspan><tspan class="c">(); </tspan><tspan class="t">i</tspan><tspan class="g">++</tspan><tspan class="c">) </tspan><tspan class="t">prevCol</tspan><tspan class="c">[</tspan><tspan class="t">i</tspan><tspan class="c">]</tspan><tspan class="g"> = </tspan><tspan class="t">i</tspan><tspan class="c">;</tspan></text>
<text class="m" x="52.700" y="888.500"><tspan class="v">for </tspan><tspan class="c">(</tspan><tspan class="g">unsigned int </tspan><tspan class="v">i</tspan><tspan class="g"> = </tspan><tspan class="r">0</tspan><tspan class="c">; </tspan><tspan class="t">i</tspan><tspan class="g"> &lt; </tspan><tspan class="t">len1</tspan><tspan class="c">; </tspan><tspan class="t">i</tspan><tspan class="g">++</tspan><tspan class="c">) {</tspan></text>
<text class="m" x="92.700" y="909"><tspan class="t">col</tspan><tspan class="c">[</tspan><tspan class="r">0</tspan><tspan class="c">]</tspan><tspan class="g"> = </tspan><tspan class="t">i</tspan><tspan class="g"> + </tspan><tspan class="r">1</tspan><tspan class="c">;</tspan></text>
<!-- preview scrollbars -->
<rect x="8" y="920" width="1877" height="24" fill="#f0f0f0"/>
<rect x="34" y="920" width="1799" height="24" fill="#c8c8c8"/>
<use href="#cl" x="16" y="925"/><use href="#cr" x="1867" y="925"/>
<rect x="1885" y="744" width="26" height="200" fill="#f0f0f0"/>
<use href="#cu" x="1891" y="754"/><use href="#cd" x="1891" y="928"/>
<path d="M1885.500 770V918.500H1910.500V770Z" fill="none" stroke="#c8c8c8"/>
<rect x="1886" y="778" width="24" height="35" fill="#c8c8c8"/>
<path d="M1892 794H1905M1892 798H1905" stroke="#f4f4f4"/>
<path d="M1887 816h14M1887 820h18M1888 824h10M1887 828h15M1887 832h10M1887 838h12M1887 842h16M1887 846h6M1888 852h20M1887 860h16M1887 866h13M1888 872h8M1887 884h14M1889 888h18M1888 892h10M1892 898h18M1887 902h8M1888 908h12" stroke="#c6c6c6" stroke-width="2"/>
<path d="M1886 787h12M1886 801h10M1886 806h14" stroke="#b4b4b4" stroke-width="2"/>
<!-- preview bottom toolbar -->
<use href="#al" x="10" y="952"/><use href="#ar2" x="43" y="952"/>
<use href="#hand" x="76" y="953"/>
<use href="#book" x="109" y="953"/>
<text x="142" y="975" font-family="Liberation Serif" font-weight="bold" font-style="italic" font-size="29" fill="#24249a" stroke="#24249a" stroke-width=".5" textLength="23" lengthAdjust="spacingAndGlyphs">R</text>
<use href="#tree" x="175" y="953"/>
<path d="M205.500 951V977M246.500 951V977" stroke="#9aa2aa"/>
<path d="M223 964V958Q227 952 231 958V964" fill="none" stroke="#777" stroke-width="2"/><rect x="220" y="964" width="15" height="11" fill="#c0c0c0" stroke="#444"/>
<use href="#gear" x="255" y="952"/>
</svg>
</body></html>
